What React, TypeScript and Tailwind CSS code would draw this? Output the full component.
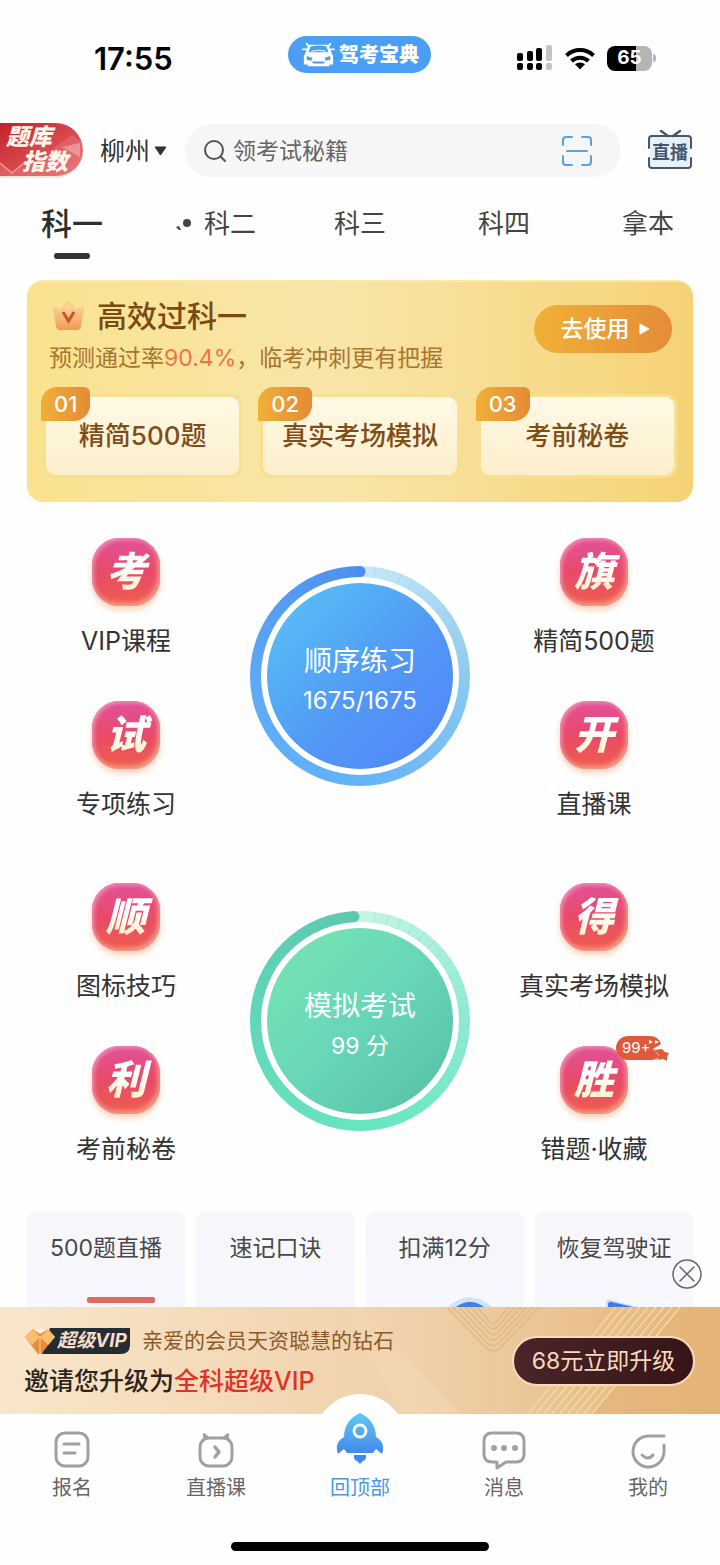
import type { ReactNode } from 'react'

const tabs = ['科一', '科二', '科三', '科四', '拿本']

const steps = [
  { no: '01', label: '精简500题' },
  { no: '02', label: '真实考场模拟' },
  { no: '03', label: '考前秘卷' },
]

const quickCards = ['500题直播', '速记口诀', '扣满12分', '恢复驾驶证']

type Entry = { char: string; label: string; badge?: string }

function StatusBar() {
  return (
    <div className="flex h-[109px] items-start justify-between pt-9 pr-16 pl-[94px]">
      <span className="w-[108px] pt-[3px] text-[31px] leading-10 font-semibold text-black">17:55</span>
      <div className="flex h-[37px] items-center gap-1 rounded-full bg-[#4a9ff5] pr-3 pl-[14px] text-white">
        <svg width="33" height="26" viewBox="0 0 35 26" fill="none">
          <path d="M7 2h21l3 8 2 4v9h-4v2H6v-2H2v-9l2-4z" fill="white" />
          <path d="M1 7h5M29 7h5M5 1l2 3M30 1l-2 3" stroke="white" strokeWidth="2" strokeLinecap="round" />
          <path d="M9 4q9-2 17 0l2 6H7z" fill="#4a9ff5" />
          <path d="M10 9q8-2 15 0" stroke="white" />
          <path d="M5 14l6 2-1 3-5-1zM30 14l-6 2 1 3 5-1z" fill="#4a9ff5" />
          <path d="M12 21h11" stroke="#4a9ff5" strokeWidth="2" strokeLinecap="round" />
        </svg>
        <span className="text-xl leading-6 font-black">驾考宝典</span>
      </div>
      <div className="flex h-11 items-center gap-3">
        <svg width="36" height="26" viewBox="0 0 36 26">
          <g fill="black">
            <rect x="0" y="8" width="6" height="8" rx="2" />
            <rect x="10" y="6" width="6" height="10" rx="2" />
            <rect x="19" y="3" width="6" height="13" rx="2" />
            <rect x="0" y="18" width="6" height="7" rx="2" />
            <rect x="10" y="18" width="6" height="7" rx="2" />
            <rect x="19" y="18" width="6" height="7" rx="2" />
          </g>
          <g fill="#c4c4c4">
            <rect x="29" y="0" width="6" height="16" rx="2" />
            <rect x="29" y="18" width="6" height="7" rx="2" />
          </g>
        </svg>
        <svg width="30" height="23" viewBox="0 0 30 23" fill="none" stroke="black" strokeWidth="4">
          <path d="M1.500 8.500a19.500 19.500 0 0 1 27 0" />
          <path d="M6.500 14a12.500 12.500 0 0 1 17 0" />
          <path d="M15 22.500l-5-5.200a7.500 7.500 0 0 1 10 0z" fill="black" stroke="none" />
        </svg>
        <div className="flex items-center gap-px">
          <span className="flex h-[25px] w-[45px] items-center justify-center rounded-lg bg-linear-to-r from-black from-65% to-[#b5b5b5] to-65% text-[19px] leading-6 font-bold text-white">
            65
          </span>
          <span className="h-2 w-[3px] rounded-r-full bg-[#b5b5b5]" />
        </div>
      </div>
    </div>
  )
}

function Header() {
  return (
    <header className="flex items-center pt-[14px] pr-7">
      <button className="relative h-[55px] w-[83px] shrink-0 overflow-hidden rounded-r-full border-b-2 border-[#fbe3dc] bg-linear-to-br from-[#c41f2a] to-[#e8646a] text-left text-[23px] leading-[25px] font-black text-[#fff6ea] italic">
        <svg className="absolute inset-0" width="83" height="55" viewBox="0 0 83 55" fill="none">
          <path d="M0 40l12 10 14-12 14 8 12-20 20-14 11 8v35H0z" fill="white" opacity="0.130" />
          <path d="M0 40l12 10 14-12" stroke="#f59a92" strokeWidth="1.500" />
          <path d="M62 24l18-4v14z" fill="white" opacity="0.300" />
        </svg>
        <span className="relative block pl-[6px]">题库</span>
        <span className="relative block pl-[22px]">指数</span>
      </button>
      <button className="ml-[17px] flex shrink-0 items-center gap-1 text-[25px] leading-8 text-[#333]">
        柳州
        <svg width="13" height="10" viewBox="0 0 13 10" fill="#333">
          <path d="M1 1h11L6.500 9z" stroke="#333" strokeLinejoin="round" />
        </svg>
      </button>
      <div className="ml-[18px] flex h-[53px] min-w-0 flex-1 items-center rounded-full bg-[#f6f6f6] pr-7 pl-[18px]">
        <svg width="24" height="24" viewBox="0 0 24 24" fill="none" stroke="#555" strokeWidth="2" strokeLinecap="round">
          <circle cx="11" cy="11" r="9" />
          <path d="M17.500 17.500L22 22" />
        </svg>
        <input
          aria-label="搜索"
          placeholder="领考试秘籍"
          className="ml-[6px] min-w-0 flex-1 bg-transparent text-[23px] leading-8 text-[#666] outline-none placeholder:text-[#666]"
        />
        <button aria-label="扫一扫">
          <svg width="32" height="32" viewBox="0 0 32 32" fill="none" stroke="#55a4e4" strokeWidth="2" strokeLinecap="round">
            <path d="M2 10V5a3 3 0 0 1 3-3h6M21 2h6a3 3 0 0 1 3 3v5M30 21v6a3 3 0 0 1-3 3h-6M11 30H5a3 3 0 0 1-3-3v-6M6 16h20" />
          </svg>
        </button>
      </div>
      <button className="relative ml-[27px] h-[41px] w-11 shrink-0 pt-1 text-[18px] leading-9 font-semibold text-[#42566d]">
        <svg className="absolute inset-0" width="44" height="41" viewBox="0 0 44 41" fill="none" stroke="#4d565f" strokeWidth="2" strokeLinecap="round">
          <rect x="2" y="6" width="40" height="32" rx="4" fill="#e3f1fd" stroke="none" />
          <path d="M1 18V9a3 3 0 0 1 3-3h36a3 3 0 0 1 3 3v9M43 28v7a3 3 0 0 1-3 3H4a3 3 0 0 1-3-3v-7" />
          <path d="M13 1l7 5M32 1l-7 5" strokeWidth="2.500" />
        </svg>
        <span className="relative">直播</span>
      </button>
    </header>
  )
}

function SubjectTabs() {
  return (
    <nav className="mt-[23px] grid grid-cols-5">
      {tabs.map((tab, i) => (
        <button key={tab} className="flex h-[59px] flex-col items-center text-[26px] leading-[46px] text-[#444]">
          {i === 0 ? (
            <>
              <span className="text-[31px] font-medium text-[#2e2e2e]">{tab}</span>
              <span className="mt-[6px] h-[6px] w-9 rounded-full bg-[#333]" />
            </>
          ) : (
            <span className="flex items-center gap-3">
              {i === 1 && (
                <svg width="16" height="14" viewBox="0 0 16 14" fill="#444">
                  <circle cx="11" cy="6" r="4" />
                  <path d="M0 10l3-1 2 4-2 0z" />
                </svg>
              )}
              {tab}
            </span>
          )}
        </button>
      ))}
    </nav>
  )
}

function PassCard() {
  return (
    <section className="mx-[27px] mt-5 rounded-2xl border-t-2 border-[#fae8ae] bg-linear-to-r from-[#fae28e] via-[#f8e6a8] via-45% to-[#f6d275] px-4 pt-[14px] pb-6">
      <div className="flex justify-between">
        <div className="pl-[6px]">
          <h2 className="flex h-10 items-center gap-[11px] pl-[2px] text-[30px] leading-10 font-medium text-[#7a4a12]">
            <svg width="35" height="30" viewBox="0 0 35 30" fill="none">
              <defs>
                <linearGradient id="crown" x1="0" y1="0" x2="0" y2="1">
                  <stop offset="0" stopColor="#fbd9a0" />
                  <stop offset="1" stopColor="#f09a50" />
                </linearGradient>
              </defs>
              <path d="M9 8l8.500-8L26 8z" fill="#f5d08a" />
              <path d="M1 4l9 4 7.500-5L25 8l9-4-4 21q-.500 4-4 4H9q-3.500 0-4-4z" fill="url(#crown)" />
              <path d="M12 11l5.500 9L23 11" stroke="#c9562c" strokeWidth="3" />
            </svg>
            高效过科一
          </h2>
          <p className="mt-[6px] text-[23px] leading-8 text-[#a9762f]">
            预测通过率<span className="text-[#ee7440]">90.4%</span>，临考冲刺更有把握
          </p>
        </div>
        <button className="mt-[9px] mr-[5px] flex h-12 w-[138px] shrink-0 items-center justify-center gap-[9px] rounded-full bg-linear-to-r from-[#efb136] to-[#e58c38] pl-1 text-[23px] leading-8 font-medium text-white">
          去使用
          <svg width="11" height="12" viewBox="0 0 11 12" fill="white">
            <path d="M1 1l9 5-9 5z" stroke="white" strokeLinejoin="round" />
          </svg>
        </button>
      </div>
      <div className="mt-5 grid grid-cols-3 gap-[18px]">
        {steps.map((s) => (
          <button
            key={s.no}
            className="relative h-[84px] rounded-xl border-3 border-[#f8df92] bg-linear-to-b from-[#fff9e6] to-[#fbeecb] text-[26px] leading-[78px] font-medium whitespace-nowrap text-[#7f4d18]"
          >
            {s.label}
            <span className="absolute -top-[10px] -left-[5px] h-[34px] rounded-tl-2xl rounded-tr-md rounded-br-2xl bg-linear-to-r from-[#efb038] to-[#e58a35] px-[13px] text-[22px] leading-[34px] text-white">
              {s.no}
            </span>
          </button>
        ))}
      </div>
    </section>
  )
}

function SealTile({ char, label, badge }: Entry) {
  return (
    <button className="flex flex-col items-center">
      <span className="relative flex h-[68px] w-[68px] items-center justify-center rounded-[27px] bg-linear-to-b from-[#e2509a] via-[#e84a68] via-50% to-[#ef5d4a] shadow-[0_4px_6px_#fdd3b8,inset_2px_2px_4px_#f090b4,inset_-2px_-3px_5px_#f7a08c]">
        <span className="bg-linear-to-b from-white from-40% to-[#fdeab8] bg-clip-text px-2 text-[40px] leading-[56px] font-black text-transparent italic">
          {char}
        </span>
        {badge && (
          <span className="absolute -top-[10px] left-14 h-[26px] w-[54px] text-left text-[15px] leading-[24px] text-white">
            <svg className="absolute inset-0" width="54" height="26" viewBox="0 0 54 26">
              <path d="M12 0H34q8 0 11 8l-8 5 7 8q-4 3-8 3H12a12 12 0 0 1 0-24z" fill="#dd5a3a" />
              <path d="M46 13l3 3 4 1-2 4 0 4-4-2-5 1 1-5-5-5z" fill="#dd5a3a" />
              <path d="M33 4l4 2-4 2zM39 4l4 2-4 2z" fill="white" />
            </svg>
            <span className="relative pl-[6px]">{badge}</span>
          </span>
        )}
      </span>
      <span className="mt-5 text-[25px] leading-[30px] whitespace-nowrap text-[#333]">{label}</span>
    </button>
  )
}

function TileColumn({ items }: { items: Entry[] }) {
  return (
    <div className="flex flex-col gap-[45px]">
      {items.map((item) => (
        <SealTile key={item.char} {...item} />
      ))}
    </div>
  )
}

function PracticeGroup({ left, right, children }: { left: Entry[]; right: Entry[]; children: ReactNode }) {
  return (
    <section className="grid grid-cols-[1fr_auto_1fr] items-start gap-x-[25px] px-[27px]">
      <TileColumn items={left} />
      <div className="pt-7">{children}</div>
      <TileColumn items={right} />
    </section>
  )
}

function RingTicks({ color, cap, capX }: { color: string; cap: string; capX: number }) {
  const ticks = Array.from({ length: 13 }, (_, i) => 8 + i * 7)
  return (
    <svg className="absolute inset-0" width="220" height="220" viewBox="0 0 220 220">
      {ticks.map((deg) => (
        <path key={deg} d="M110 0v11" stroke={color} opacity="0.500" transform={`rotate(${deg} 110 110)`} />
      ))}
      <circle cx={capX} cy="5.500" r="5.500" fill={cap} />
    </svg>
  )
}

function QuickCards() {
  return (
    <section className="mx-[27px] mt-12 grid h-[95px] grid-cols-4 gap-[11px] overflow-hidden">
      {quickCards.map((label, i) => (
        <button
          key={label}
          className="flex h-40 flex-col items-center rounded-lg bg-linear-to-b from-[#f6f6fb] to-[#f7f9fe] pt-5 text-[23px] leading-8 whitespace-nowrap text-[#484848]"
        >
          {label}
          {i !== 1 && (
            <svg className="mt-7" width="158" height="40" viewBox="0 0 158 40">
              {i === 0 && <rect x="60" y="5" width="68" height="6" rx="2" fill="#df6a62" />}
              {i === 2 && (
                <>
                  <path d="M80 17q24-24 48 0l16 23H60z" fill="#d3e2fb" />
                  <path d="M84 20q20-20 40 0z" fill="#3f7de8" />
                </>
              )}
              {i === 3 && (
                <>
                  <path d="M71 20V11q0-4 4-3l40 10z" fill="#c6dcfb" />
                  <path d="M73 20v-7q0-4 4-3l38 9v10H73z" fill="#3f7de8" />
                </>
              )}
            </svg>
          )}
        </button>
      ))}
    </section>
  )
}

function VipBanner() {
  return (
    <section className="relative flex h-[107px] items-center justify-between bg-linear-to-r from-[#f9e6ca] via-[#efcfa8] via-60% to-[#e4b478] pr-[25px] pl-6">
      <svg className="absolute inset-0 h-full w-full" viewBox="0 0 720 107" preserveAspectRatio="xMaxYMid slice" fill="none">
        <path d="M360 0l100 107h-60L345 0z" fill="#f5dcb8" opacity="0.400" />
        <path d="M680 0h40v107H592z" fill="#e4b377" opacity="0.600" />
        <g stroke="#e2b988" strokeWidth="1.500">
          <path d="M447 0l38 40q8 8 16 0L539 0" />
          <path d="M453 0l33 35q7 7 14 0L533 0" />
          <path d="M459 0l28 30q6 6 12 0L527 0" />
          <path d="M465 0l23 25q5 5 10 0L521 0" />
          <path d="M471 0l18 20q4 4 8 0L515 0" />
          <path d="M477 0l13 15q3 3 6 0L509 0" />
        </g>
        <g stroke="#f3d8a4" strokeWidth="1.500">
          <path d="M616 0l-88 107M624 0l-88 107M632 0l-88 107M640 0l-88 107M648 0l-88 107M656 0l-88 107M664 0l-88 107M672 0l-88 107M680 0l-88 107" />
          <path d="M404 52l50 55M412 72l34 35" opacity="0.500" />
        </g>
      </svg>
      <div className="relative pt-1">
        <div className="flex items-center gap-3">
          <span className="relative h-7 w-[106px] pl-[33px] text-[19px] leading-7 font-bold whitespace-nowrap text-[#f3ddcb] italic">
            <svg className="absolute inset-0" width="106" height="28" viewBox="0 0 106 28" fill="none">
              <path d="M26 1h80v18q-1 8-9 8H18z" fill="#252c34" />
              <path d="M9 2h15l7 8-14 17h-3L1 10z" fill="#e9893a" />
              <path d="M9 2l7 8 8-8 7 8-7 8-8-8-8 8-7-8z" fill="#f9bd72" />
              <path d="M9 2l7 5 8-5z" fill="#fff0d8" />
              <path d="M16 9v18" stroke="#fbd4a0" />
            </svg>
            <span className="relative">超级VIP</span>
          </span>
          <span className="text-[21px] leading-7 text-[#8a5a2c]">亲爱的会员天资聪慧的钻石</span>
        </div>
        <p className="mt-2 text-[25px] leading-9 font-medium text-[#2d2420]">
          邀请您升级为<span className="text-[#df3327]">全科超级VIP</span>
        </p>
      </div>
      <button className="relative h-[50px] w-[183px] shrink-0 rounded-full border-2 border-[#f8dcb8] bg-linear-to-r from-[#4a2529] to-[#351519] text-[23px] leading-[46px] whitespace-nowrap text-[#fbd9bd]">
        68元立即升级
      </button>
      <button aria-label="关闭" className="absolute -top-[48px] right-[18px]">
        <svg width="30" height="30" viewBox="0 0 30 30" fill="none" stroke="#666" strokeWidth="1.500" strokeLinecap="round">
          <circle cx="15" cy="15" r="14" />
          <path d="M8 8l14 14M22 8L8 22" />
        </svg>
      </button>
    </section>
  )
}

const iconProps = {
  fill: 'none',
  stroke: '#a0a0a0',
  strokeWidth: 3,
  strokeLinecap: 'round' as const,
  strokeLinejoin: 'round' as const,
}

const navItems = [
  {
    label: '报名',
    icon: (
      <svg width="36" height="40" viewBox="0 0 36 40" {...iconProps}>
        <rect x="2" y="3" width="32" height="33" rx="9" />
        <path d="M10 14h15M10 23h11" />
      </svg>
    ),
  },
  {
    label: '直播课',
    icon: (
      <svg width="38" height="40" viewBox="0 0 38 40" {...iconProps}>
        <rect x="3" y="8" width="32" height="28" rx="9" />
        <path d="M7 9V4l5 4zM31 9V4l-5 4z" fill="#a0a0a0" strokeWidth="2" />
        <path d="M18 17l4 5-4 5" strokeWidth="3.500" />
      </svg>
    ),
  },
  {
    label: '回顶部',
    active: true,
    icon: (
      <svg className="absolute -top-px" width="48" height="52" viewBox="0 0 48 52">
        <defs>
          <linearGradient id="rocket" x1="0" y1="0" x2="0" y2="1">
            <stop offset="0" stopColor="#62c9ef" />
            <stop offset="1" stopColor="#4288ec" />
          </linearGradient>
        </defs>
        <path
          d="M24 0C33 4 40 12 40 24C46 27 49 33 46 41L40 36L37 40H11L8 36L2 41C-1 33 2 27 8 24C8 12 15 4 24 0z"
          fill="url(#rocket)"
        />
        <circle cx="24" cy="18" r="6" fill="none" stroke="#f0faff" strokeWidth="3" />
        <path d="M18 42h12v2q0 3-3 4l-3 3-3-3q-3-1-3-4z" fill="#4288ec" />
      </svg>
    ),
  },
  {
    label: '消息',
    icon: (
      <svg width="44" height="40" viewBox="0 0 44 40" {...iconProps}>
        <path d="M10 3h24q8 0 8 8v13q0 8-8 8H24l-9 6v-6h-5q-8 0-8-8V11q0-8 8-8z" />
        <path d="M12 18h0M22 18h0M33 18h0" strokeWidth="6" />
      </svg>
    ),
  },
  {
    label: '我的',
    icon: (
      <svg width="36" height="40" viewBox="0 0 36 40" {...iconProps}>
        <path d="M34 6H18A15.500 15.500 0 1 0 34 22v-7" />
        <path d="M12 25q6 6 11 0" />
      </svg>
    ),
  },
]

function BottomNav() {
  return (
    <footer className="pb-[14px]">
      <nav className="grid grid-cols-5">
        {navItems.map((item) => (
          <button key={item.label} className="relative flex flex-col items-center pt-4">
            {item.active && <span className="absolute -top-5 h-[92px] w-[92px] rounded-full bg-[#fefefe]" />}
            <span className="h-10">{!item.active && item.icon}</span>
            {item.active && <span className="absolute top-0 flex w-full justify-center">{item.icon}</span>}
            <span className={`relative mt-1 text-[20px] leading-7 ${item.active ? 'text-[#4b98e4]' : 'text-[#666]'}`}>
              {item.label}
            </span>
          </button>
        ))}
      </nav>
      <div className="mx-auto mt-10 h-[9px] w-[258px] rounded-full bg-black" />
    </footer>
  )
}

export default function App() {
  return (
    <div className="bg-[#fefefe] font-['Inter','Noto_Sans_CJK_SC',sans-serif]">
      <StatusBar />
      <Header />
      <SubjectTabs />
      <PassCard />
      <div className="mt-9 flex flex-col gap-16">
        <PracticeGroup
          left={[
            { char: '考', label: 'VIP课程' },
            { char: '试', label: '专项练习' },
          ]}
          right={[
            { char: '旗', label: '精简500题' },
            { char: '开', label: '直播课' },
          ]}
        >
          <button className="relative flex h-[220px] w-[220px] items-center justify-center rounded-full bg-[conic-gradient(#c9e9f8,#8ccaee_25%,#62b3f9_50%,#5ea9f5_75%,#4b90ee)]">
            <RingTicks color="#9fd2e6" cap="#4b90ee" capX={110} />
            <span className="flex h-[198px] w-[198px] flex-col items-center justify-center rounded-full border-6 border-white bg-linear-to-br from-[#58bdf5] from-10% via-[#5199f5] via-55% to-[#5288fa] to-90% text-white">
              <span className="mt-[10px] text-[28px] leading-10">顺序练习</span>
              <span className="text-[24px] leading-10">1675/1675</span>
            </span>
          </button>
        </PracticeGroup>
        <PracticeGroup
          left={[
            { char: '顺', label: '图标技巧' },
            { char: '利', label: '考前秘卷' },
          ]}
          right={[
            { char: '得', label: '真实考场模拟' },
            { char: '胜', label: '错题·收藏', badge: '99+' },
          ]}
        >
          <button className="relative flex h-[220px] w-[220px] items-center justify-center rounded-full bg-[conic-gradient(from_-3deg,#c8f5e6,#8eebd3_25%,#6ae7c3_45%,#62dbbb_70%,#5cc8b0)]">
            <RingTicks color="#8fd8c2" cap="#5cc8b0" capX={104} />
            <span className="flex h-[198px] w-[198px] flex-col items-center justify-center rounded-full border-6 border-white bg-linear-to-br from-[#72e2b4] from-15% via-[#68d6b8] to-[#58c3aa] to-90% text-white">
              <span className="mt-[10px] text-[28px] leading-10">模拟考试</span>
              <span className="text-[23px] leading-10">99 分</span>
            </span>
          </button>
        </PracticeGroup>
      </div>
      <QuickCards />
      <VipBanner />
      <BottomNav />
    </div>
  )
}
